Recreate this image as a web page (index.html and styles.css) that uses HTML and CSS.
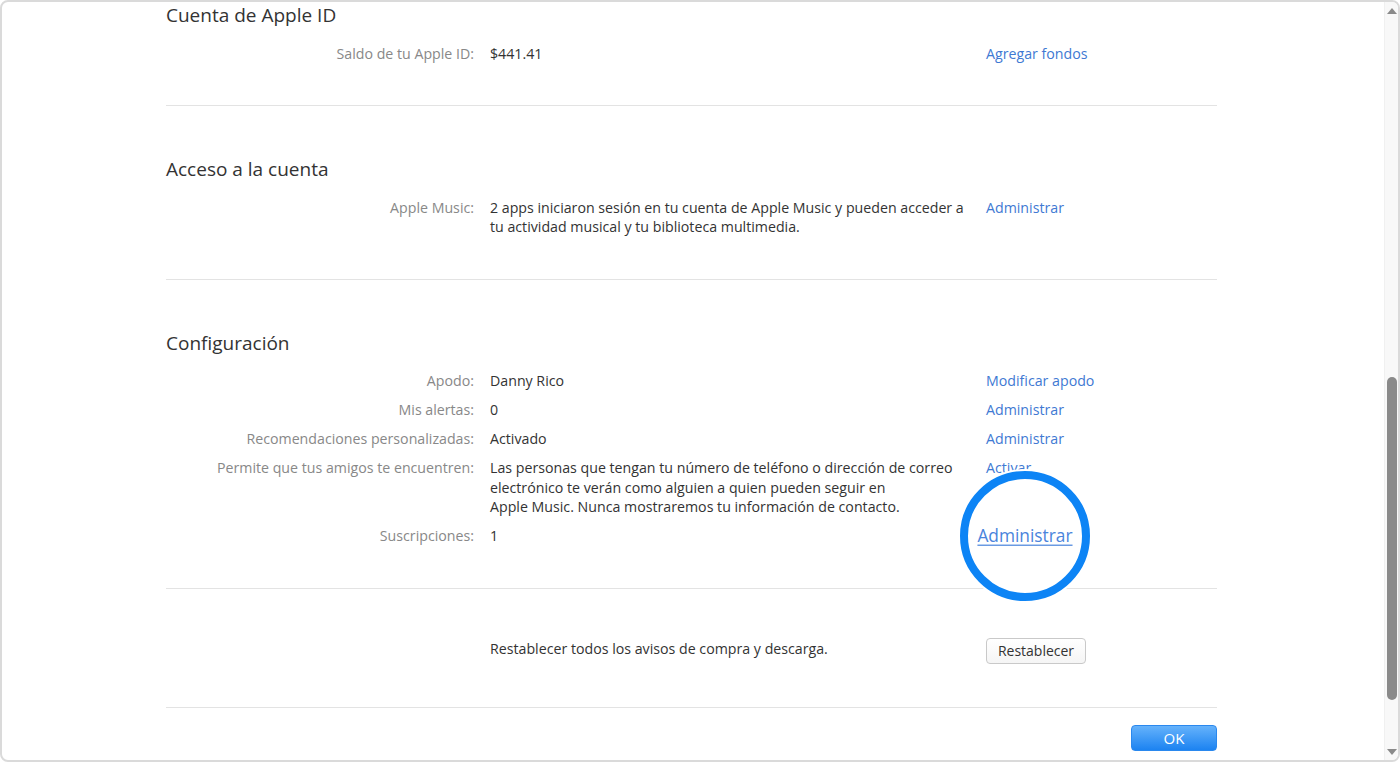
FILE: index.html
```html
<!DOCTYPE html>
<html lang="es">
<head>
<meta charset="utf-8">
<title>Información de la cuenta</title>
<link rel="stylesheet" href="styles.css">
</head>
<body>
<div class="window">
  <div class="viewport">
    <div class="content">
      <section class="section first">
        <h2 class="title">Cuenta de Apple ID</h2>
        <div class="grid">
          <div class="label">Saldo de tu Apple ID:</div>
          <div class="value">$441.41</div>
          <div class="action"><a class="link" href="#">Agregar fondos</a></div>
        </div>
      </section>

      <section class="section">
        <h2 class="title">Acceso a la cuenta</h2>
        <div class="grid">
          <div class="label">Apple Music:</div>
          <div class="value">2 apps iniciaron sesión en tu cuenta de Apple Music y pueden acceder a tu actividad musical y tu biblioteca multimedia.</div>
          <div class="action"><a class="link" href="#">Administrar</a></div>
        </div>
      </section>

      <section class="section">
        <h2 class="title">Configuración</h2>
        <div class="grid">
          <div class="label">Apodo:</div>
          <div class="value">Danny Rico</div>
          <div class="action"><a class="link" href="#">Modificar apodo</a></div>

          <div class="label">Mis alertas:</div>
          <div class="value">0</div>
          <div class="action"><a class="link" href="#">Administrar</a></div>

          <div class="label">Recomendaciones personalizadas:</div>
          <div class="value">Activado</div>
          <div class="action"><a class="link" href="#">Administrar</a></div>

          <div class="label">Permite que tus amigos te encuentren:</div>
          <div class="value">Las personas que tengan tu número de teléfono o dirección de correo electrónico te verán como alguien a quien pueden seguir en Apple&nbsp;Music. Nunca mostraremos tu información de contacto.</div>
          <div class="action"><a class="link" href="#">Activar</a></div>

          <div class="label">Suscripciones:</div>
          <div class="value">1</div>
          <div class="action"><span class="highlight"><a class="link big" href="#">Administrar</a></span></div>
        </div>
      </section>

      <section class="section reset">
        <div class="grid">
          <div class="label"></div>
          <div class="value">Restablecer todos los avisos de compra y descarga.</div>
          <div class="action"><button class="btn" type="button">Restablecer</button></div>
        </div>
      </section>

      <div class="footer">
        <button class="ok" type="button">OK</button>
      </div>
    </div>
  </div>
  <div class="scrollbar">
    <span class="arrow up"></span>
    <span class="thumb"></span>
    <span class="arrow down"></span>
  </div>
</div>
</body>
</html>
```

FILE: styles.css
```css
*, *::before, *::after { box-sizing: border-box; }

html, body {
  margin: 0;
  padding: 0;
  height: 100%;
  background: #ffffff;
  overflow: hidden;
}

body {
  font-family: "Open Sans", "Noto Sans", "Liberation Sans", sans-serif;
  font-size: 14.2px;
  color: #333333;
}

.window {
  height: 762px;
  width: 1400px;
  border: 2px solid #dadada;
  border-radius: 8px;
  display: flex;
  overflow: hidden;
  background: #ffffff;
}

.viewport {
  flex: 1;
  overflow: hidden;
}

.content {
  width: 1051px;
  margin-left: 164px;
}

.section {
  padding: 50px 0 42px;
  border-bottom: 1px solid #e3e3e3;
}

.section.first {
  padding-top: 0;
}

.title {
  margin: 0 0 15.5px;
  font-size: 19px;
  font-weight: 400;
  line-height: 26px;
  color: #333333;
}

.grid {
  display: grid;
  grid-template-columns: 308px 480px auto;
  column-gap: 16px;
  row-gap: 9.5px;
  line-height: 19.5px;
}

.label {
  text-align: right;
  color: #888888;
}

.value {
  color: #333333;
}

.link {
  color: #4079d3;
  text-decoration: none;
}

.highlight {
  position: relative;
  z-index: 1;
  display: block;
  width: fit-content;
}

.highlight::before {
  content: "";
  position: absolute;
  left: 50%;
  top: 50%;
  width: 130px;
  height: 130px;
  margin: -65px 0 0 -65px;
  border: 8px solid #0d84f5;
  border-radius: 50%;
  background: #ffffff;
  box-shadow: 0 0 0 2px #ffffff;
  z-index: -1;
}

.link.big {
  display: inline-block;
  transform: scale(1.22);
  text-decoration: underline;
  text-decoration-thickness: 1px;
  text-underline-offset: 2px;
  color: #4a84dc;
}

.reset {
  padding: 49px 0 43px;
}

.reset .grid {
  align-items: center;
}

.reset .value {
  margin-top: -3px;
}

.btn {
  font-family: inherit;
  font-size: 14px;
  color: #333333;
  width: 100px;
  height: 26px;
  padding: 0;
  border: 1px solid #c9c9c9;
  border-radius: 4px;
  background: linear-gradient(#ffffff, #f5f5f5);
}

.footer {
  display: flex;
  justify-content: flex-end;
  padding-top: 17px;
}

.ok {
  font-family: inherit;
  font-size: 15px;
  color: #ffffff;
  width: 86px;
  height: 26px;
  padding: 0;
  border: 1px solid #2a88ee;
  border-radius: 4px;
  background: linear-gradient(#65b2fb, #1c83f1);
}

.scrollbar {
  width: 14px;
  flex: none;
  background: #f8f8f8;
  border-left: 1px solid #f0f0f0;
  display: flex;
  flex-direction: column;
  align-items: center;
}

.arrow {
  width: 0;
  height: 0;
  border-left: 5px solid transparent;
  border-right: 5px solid transparent;
}

.arrow.up {
  margin-top: 6px;
  border-bottom: 6px solid #8a8a8a;
}

.arrow.down {
  margin-top: 49px;
  margin-bottom: 5px;
  border-top: 6px solid #8a8a8a;
}

.thumb {
  margin-top: auto;
  width: 10px;
  height: 323px;
  border-radius: 5px;
  background: #8a8a8a;
}
```
